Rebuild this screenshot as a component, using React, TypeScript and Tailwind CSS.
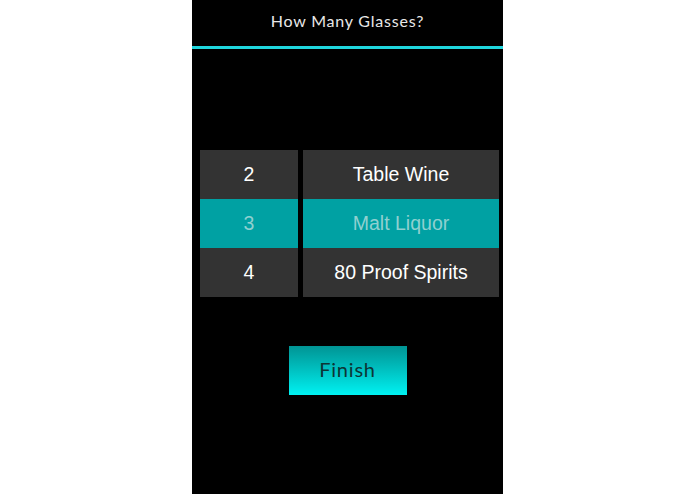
const numbers = ["2", "3", "4"]
const drinks = ["Table Wine", "Malt Liquor", "80 Proof Spirits"]
const selected = 1

function Wheel({ items, width }: { items: string[]; width: string }) {
  return (
    <div className={`flex flex-col bg-[#333333] ${width}`}>
      {items.map((item, i) => (
        <div
          key={item}
          className={`flex h-[49px] items-center justify-center text-[19.5px] ${
            i === selected ? "bg-[#00a1a3] text-[#8fd0d0]" : "text-white"
          }`}
        >
          {item}
        </div>
      ))}
    </div>
  )
}

export default function App() {
  return (
    <div className="flex h-[494px] w-[695px] justify-center bg-white">
      <div className="flex h-full w-[311px] flex-col bg-black">
        <div className="flex h-[46px] items-center justify-center pb-[4px] font-['Lato',sans-serif] text-[16px] tracking-[0.8px] text-[#e8e8e8]">
          How Many Glasses?
        </div>
        <div className="h-[3px] bg-[#1fd6dd]" />

        <div className="mt-[101px] flex gap-[5px] pl-[8px] font-['Liberation_Sans',Arial,sans-serif]">
          <Wheel items={numbers} width="w-[98px]" />
          <Wheel items={drinks} width="w-[196px]" />
        </div>

        <div className="mt-[49px] flex justify-center">
          <button className="h-[49px] w-[118px] pb-[4px] bg-gradient-to-b from-[#009494] to-[#00f2f2] font-['Lato',sans-serif] text-[20px] tracking-[0.8px] text-[#0d3535]">
            Finish
          </button>
        </div>
      </div>
    </div>
  )
}
